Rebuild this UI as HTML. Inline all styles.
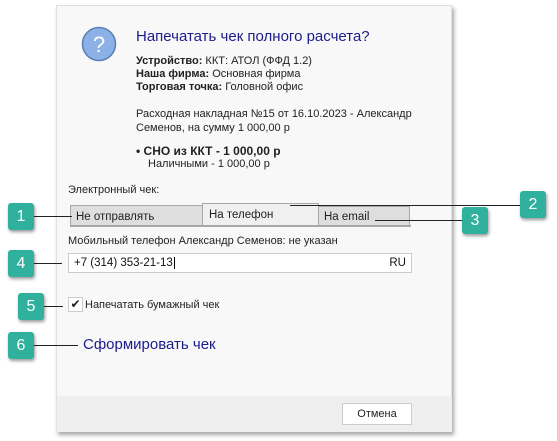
<!DOCTYPE html><html><head><meta charset="utf-8"><style>
*{margin:0;padding:0;box-sizing:border-box}
body{width:557px;height:441px;background:#fff;position:relative;font-family:"Liberation Sans",sans-serif;font-size:11px;color:#222;overflow:hidden}
.a{position:absolute;white-space:nowrap}
.dlg{position:absolute;left:56px;top:5px;width:396px;height:427px;background:#f8f8f8;border:1px solid #e0e0e0;box-shadow:2px 3px 4px rgba(0,0,0,.35)}
.foot{position:absolute;left:57px;top:396px;width:395px;height:36px;background:#efefef}
.b{position:absolute;width:26px;height:27px;background:#2fb19e;border-radius:3px;color:#fff;font-size:16px;text-align:center;line-height:27px;box-shadow:1px 2px 3px rgba(0,0,0,.4)}
.l{position:absolute;height:1px;background:#222}
.tab{position:absolute;border:1px solid #a8a8a8;background:#dedede;padding-left:5px;font-size:11.5px}
</style></head><body>
<div class="dlg"></div><div class="foot"></div>
<svg class="a" style="left:81px;top:26px" width="36" height="36"><circle cx="18" cy="18" r="16.5" fill="#8cb1e6" stroke="#5a7fb8" stroke-width="1.5"/><text x="18" y="26" font-family="Liberation Sans" font-size="22" fill="#fff" text-anchor="middle">?</text></svg>
<div class="a" style="left:136px;top:28px;font-size:15px;color:#1c1c8a">Напечатать чек полного расчета?</div>
<div class="a" style="left:136px;top:55px;line-height:13px"><b>Устройство:</b> ККТ: АТОЛ (ФФД 1.2)<br><b>Наша фирма:</b> Основная фирма<br><b>Торговая точка:</b> Головной офис</div>
<div class="a" style="left:136px;top:107px;line-height:14px">Расходная накладная №15 от 16.10.2023 - Александр<br>Семенов, на сумму 1 000,00 р</div>
<div class="a" style="left:136px;top:144px;font-size:12px"><b>• СНО из ККТ - 1 000,00 р</b></div>
<div class="a" style="left:148px;top:158px">Наличными - 1 000,00 р</div>
<div class="a" style="left:68px;top:184px">Электронный чек:</div>
<div class="tab" style="left:70px;top:205px;width:133px;height:22px;line-height:22px">Не отправлять</div>
<div class="tab" style="left:318px;top:206px;width:92px;height:21px;line-height:21px">На email</div>
<div class="tab" style="left:202px;top:203px;width:117px;height:24px;background:#f0f0f0;line-height:22px;border-bottom:none;padding-left:6px">На телефон</div>
<div class="a" style="left:70px;top:225px;width:341px;height:2px;background:#a8a8a8"></div>
<div class="a" style="left:68px;top:235px">Мобильный телефон Александр Семенов: не указан</div>
<div class="a" style="left:68px;top:253px;width:344px;height:20px;background:#fff;border:1px solid #ccc;padding-left:5px;line-height:18px;font-size:11.5px;color:#111">+7 (314) 353-21-13<span style="border-left:1px solid #000;margin-left:1px"></span><span style="position:absolute;right:5px">RU</span></div>
<div class="a" style="left:68px;top:297px;width:15px;height:15px;background:#fff;border:1px solid #ccc;font-size:12px;line-height:13px;text-align:center">✔</div>
<div class="a" style="left:85px;top:299px">Напечатать бумажный чек</div>
<div class="a" style="left:83px;top:336px;font-size:15px;color:#1c1c8a">Сформировать чек</div>
<div class="a" style="left:342px;top:403px;width:70px;height:22px;background:#fff;border:1px solid #ccc;text-align:center;line-height:20px">Отмена</div>
<div class="l" style="left:33px;top:216px;width:39px"></div>
<div class="l" style="left:290px;top:205px;width:230px"></div>
<div class="l" style="left:375px;top:220px;width:87px"></div>
<div class="l" style="left:33px;top:263px;width:29px"></div>
<div class="l" style="left:33px;top:306px;width:30px"></div>
<div class="l" style="left:33px;top:345px;width:45px"></div>
<div class="b" style="left:8px;top:203px">1</div>
<div class="b" style="left:520px;top:191px">2</div>
<div class="b" style="left:462px;top:207px">3</div>
<div class="b" style="left:8px;top:250px">4</div>
<div class="b" style="left:18px;top:293px">5</div>
<div class="b" style="left:8px;top:332px">6</div>
</body></html>
